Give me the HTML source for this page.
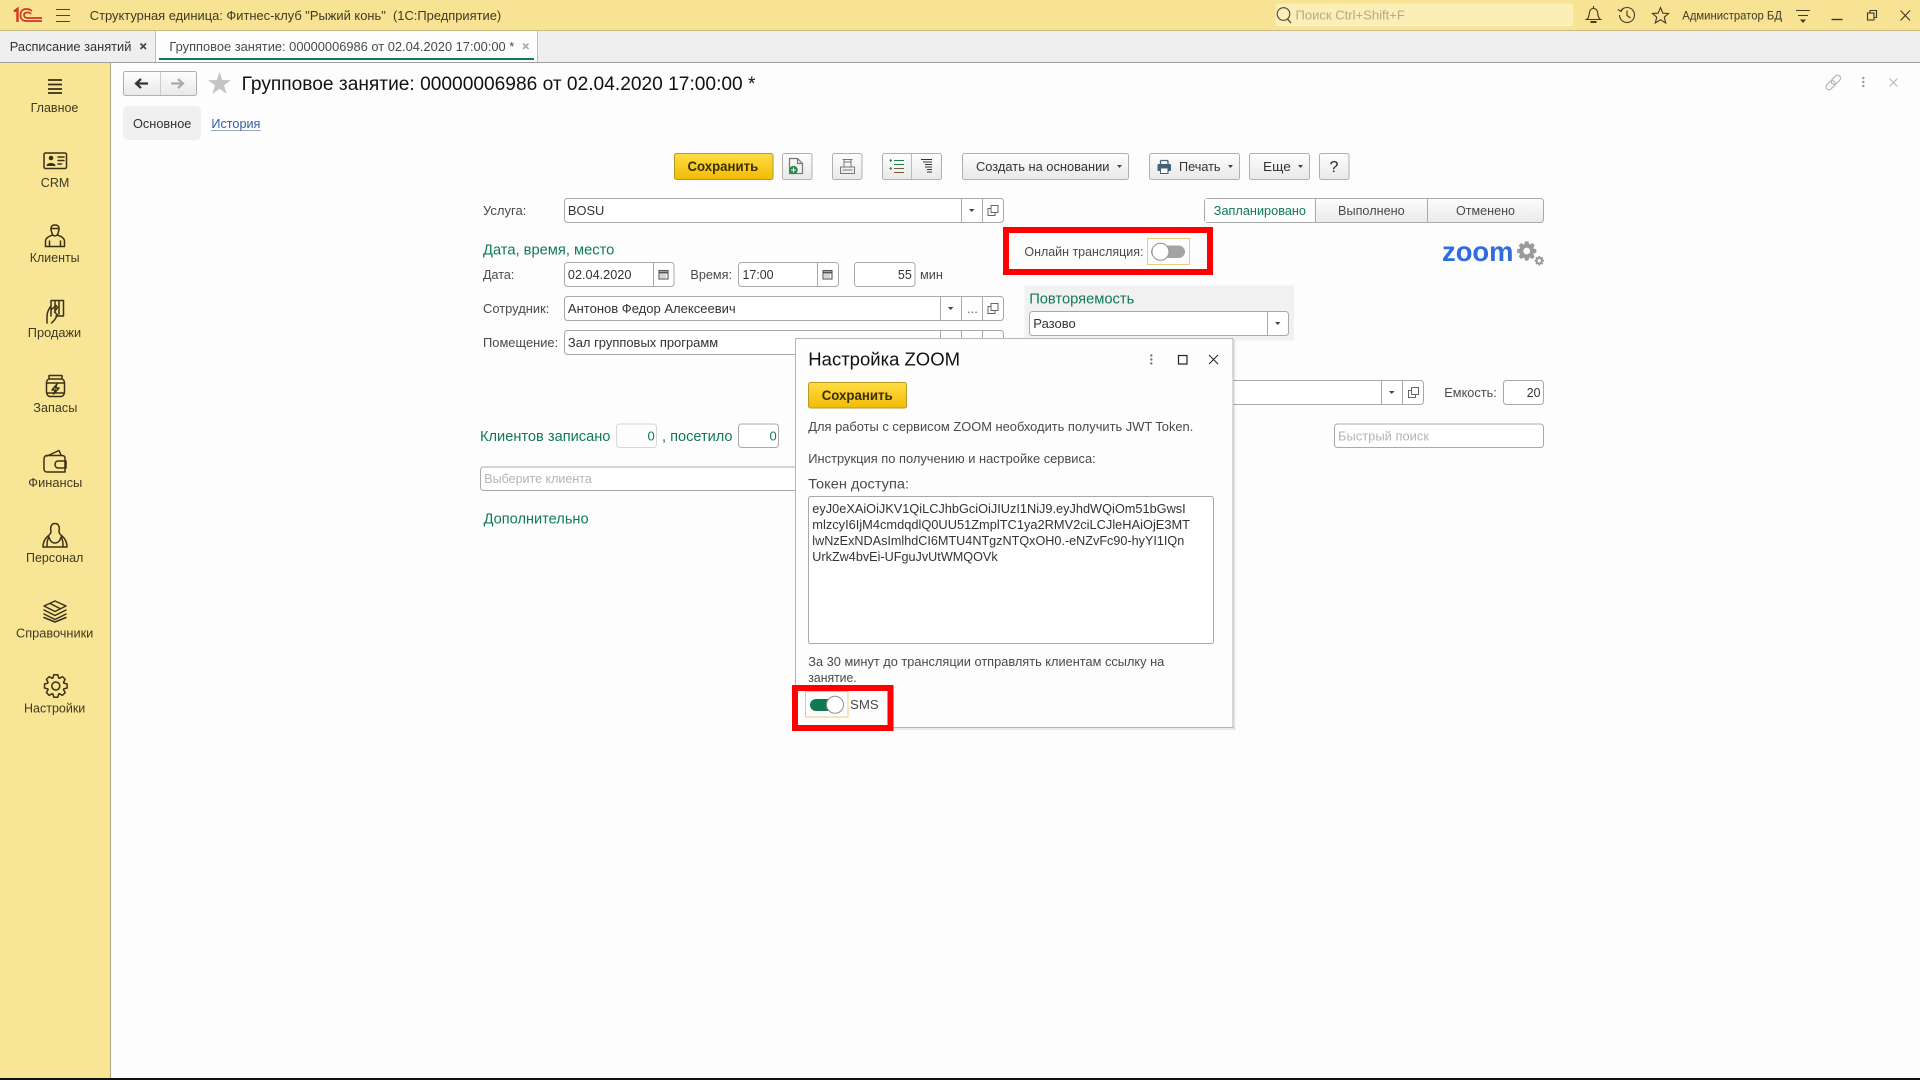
<!DOCTYPE html>
<html lang="ru"><head><meta charset="utf-8"><title>Групповое занятие</title>
<style>
html,body{margin:0;padding:0;background:#fff;width:1920px;height:1080px;overflow:hidden}
svg{display:block}
text{font-family:"Liberation Sans","Noto Sans CJK SC",sans-serif;font-size:13px;fill:#4a4a4a}
.g{fill:#0f7a55;font-size:15px}
.v{fill:#333}
.s{fill:#3f3a22;font-size:13px}
.ph{fill:#b4b4b4}
.b{font-weight:700;fill:#3a2f00;font-size:14px}
.i{fill:none;stroke:#3a3015;stroke-width:1.5;stroke-linejoin:round;stroke-linecap:round}
.f{fill:#fff;stroke:#a9a9a9;stroke-width:1}
.d{stroke:#a9a9a9;stroke-width:1}
.bt{fill:url(#btn);stroke:#b0b0b0;stroke-width:1}
.y{fill:url(#yel);stroke:#b89a22;stroke-width:1}
.a{fill:#444}
.red{fill:none;stroke:#fe0000;stroke-width:6}
.ic{fill:none;stroke:#555;stroke-width:1.2}
</style></head><body>
<svg xmlns="http://www.w3.org/2000/svg" width="1920" height="1080" viewBox="0 0 1920 1080">
<defs>
<linearGradient id="btn" x1="0" y1="0" x2="0" y2="1"><stop offset="0" stop-color="#fdfdfd"/><stop offset="1" stop-color="#e9e9e9"/></linearGradient>
<linearGradient id="yel" x1="0" y1="0" x2="0" y2="1"><stop offset="0" stop-color="#ffdd45"/><stop offset="1" stop-color="#f2bb06"/></linearGradient>
<polygon id="gear" points="8,-2.9 11.3,-2 11.3,2 8,2.9 7.7,3.6 9.4,6.6 6.6,9.4 3.6,7.7 2.9,8 2,11.3 -2,11.3 -2.9,8 -3.6,7.7 -6.6,9.4 -9.4,6.6 -7.7,3.6 -8,2.9 -11.3,2 -11.3,-2 -8,-2.9 -7.7,-3.6 -9.4,-6.6 -6.6,-9.4 -3.6,-7.7 -2.9,-8 -2,-11.3 2,-11.3 2.9,-8 3.6,-7.7 6.6,-9.4 9.4,-6.6 7.7,-3.6"/>
<g id="copy"><rect x="-2" y="-5" width="7" height="7" fill="none" stroke="#666" stroke-width="1"/><path d="M-2,-2H-5V5H2V2" fill="none" stroke="#666" stroke-width="1"/></g>
<g id="cal"><rect x="-4.5" y="-4" width="9" height="8.5" fill="none" stroke="#555" stroke-width="1.1"/><path d="M-4.5,-2H4.5" stroke="#555" stroke-width="2"/><path d="M-3,0.5H3M-3,2.5H3" stroke="#555" stroke-dasharray="1 1"/></g>
</defs>

<rect width="1920" height="1080" fill="#fdfdfd"/>
<rect y="1078" width="1920" height="2" fill="#111"/>

<!-- header -->
<rect width="1920" height="30" fill="#f8e294"/>
<rect y="30" width="1920" height="1" fill="#c9bb85"/>
<g fill="none" stroke="#d2361c" stroke-width="2.2">
<path d="M14,11.500L17.500,9V22" stroke-width="2.400"/>
<path d="M32,11C30,9.300 28,9 26,9C22.500,9 20.500,11.500 20.500,15C20.500,18.500 22.500,21 26,21H42" stroke-width="1.700"/>
<path d="M31,14C30,12.800 28.500,12.300 27,12.500C25,12.800 24,13.800 24,15C24,16.800 25.500,18 27.500,18H42" stroke-width="1.700"/>
</g>
<path d="M56,9.500H70M56,15.500H70M56,21.500H70" stroke="#4a4630" stroke-width="1.100"/>
<text x="89.800" y="20" class="s" textLength="411.400" lengthAdjust="spacingAndGlyphs" xml:space="preserve">Структурная единица: Фитнес-клуб "Рыжий конь"  (1С:Предприятие)</text>

<rect x="1275.500" y="3.500" width="297.500" height="23" rx="2" fill="#fbeeb6"/>
<circle cx="1283.500" cy="14" r="6.300" fill="none" stroke="#4a4630" stroke-width="1.100"/>
<path d="M1287.500,19L1291,23" stroke="#4a4630" stroke-width="1.300"/>
<text x="1295.500" y="19.500" style="fill:#b3ab84" textLength="109.300" lengthAdjust="spacingAndGlyphs">Поиск Ctrl+Shift+F</text>

<g fill="none" stroke="#3f3a22" stroke-width="1.100">
<path d="M1586.500,19.500C1589,18 1589,15 1589.500,12C1590,9.500 1591.500,8.500 1593.500,8.500C1595.500,8.500 1597,9.500 1597.500,12C1598,15 1598,18 1600.500,19.500Z"/>
<path d="M1593.500,6V8.500"/><path d="M1590.500,22H1596.500" stroke-width="2"/>
<path d="M1621,10.500A7.500,7.500 0 1 1 1619.500,15"/><path d="M1618,9.500L1621,11.500L1623,8.500"/><path d="M1627,10.500V15.500L1630.500,18"/>
<polygon points="1660.500,7.500 1662.900,13.200 1668.500,13.500 1664.300,17.200 1665.700,23 1660.500,19.800 1655.300,23 1656.700,17.200 1652.500,13.500 1658.100,13.200"/>
<path d="M1796,10.500H1810M1798,15.500H1808"/>
<path d="M1831.500,19.500H1842.500" stroke-width="1.400"/>
<rect x="1867.500" y="13" width="6.500" height="7"/><path d="M1870,13V10.500H1876.500V17.500H1874"/>
<path d="M1900.500,10.500L1910,20.500M1910,10.500L1900.500,20.500"/>
</g>
<polygon points="1800,19.500 1806,19.500 1803,23" fill="#3f3a22"/>
<text x="1682.300" y="19.500" class="s" style="font-size:12px" textLength="99.700" lengthAdjust="spacingAndGlyphs">Администратор БД</text>

<!-- tabs row -->
<rect y="31" width="1920" height="31" fill="#efefef"/>
<rect y="62" width="1920" height="1" fill="#9f9f9f"/>
<rect x="156" y="31" width="382" height="31" fill="#fdfdfd"/>
<path d="M155.500,31V62M537.500,31V62" stroke="#bdbdbd"/>
<rect x="159" y="58" width="375" height="2" fill="#0f7a55"/>
<text x="9.800" y="51" class="v" textLength="121.600" lengthAdjust="spacingAndGlyphs">Расписание занятий</text>
<path d="M140.500,43.500L146,49M146,43.500L140.500,49" stroke="#444" stroke-width="1.600"/>
<text x="169.400" y="51" textLength="344.900" lengthAdjust="spacingAndGlyphs">Групповое занятие: 00000006986 от 02.04.2020 17:00:00 *</text>
<path d="M523,43.500L528.500,49M528.500,43.500L523,49" stroke="#aaa" stroke-width="1.600"/>

<!-- sidebar -->
<rect y="63" width="110" height="1015" fill="#f8e596"/>
<rect x="110" y="63" width="1" height="1015" fill="#aea780"/>

<path d="M48,80H62M48,84.500H62M48,89H62M48,93H62" stroke="#3a3015" stroke-width="1.800"/>
<text x="30.600" y="112" class="s" textLength="47.800" lengthAdjust="spacingAndGlyphs">Главное</text>

<rect x="44" y="153" width="22.500" height="15.500" rx="1.500" class="i"/>
<circle cx="51" cy="158" r="2.300" fill="#3a3015"/><path d="M46.500,166C46.500,162 55.500,162 55.500,166Z" fill="#3a3015"/><path d="M58,157H64M58,160.500H64M58,164H61.500" class="i"/>
<text x="40.800" y="187" class="s" textLength="28.600" lengthAdjust="spacingAndGlyphs">CRM</text>

<path class="i" d="M51.500,231.500C50.500,228.500 50.500,225 55,225C59.500,225 59.500,228.500 58.500,231.500C58,234 57,236 55,236C53,236 52,234 51.500,231.500ZM51,228.500H59M52.500,235C49,236.500 46,237.500 45.500,241V246.500H64.500V241C64,237.500 61,236.500 57.500,235M49.500,246.500V241M60.500,246.500V241"/>
<text x="29.800" y="262" class="s" textLength="49.800" lengthAdjust="spacingAndGlyphs">Клиенты</text>

<path class="i" d="M51,316V300.500H63.500V316H56M55,300.500V312M59,300.500V314M51,306C48.500,309 47,313 47,317V323M51,310L56,305.500L57.500,307.500L54.500,312L57.500,315L54.500,320L51.500,323"/>
<text x="27.800" y="337" class="s" textLength="53.400" lengthAdjust="spacingAndGlyphs">Продажи</text>

<path class="i" d="M49,375.500H62V379H49ZM48,379.500C46.500,380.500 46.500,381.500 46.500,383V392C46.500,395 48.500,396.500 50,396.500H61C62.500,396.500 64.500,395 64.500,392V383C64.500,381.500 64.500,380.500 63,379.500M46.500,393H64.500M46.500,383H64.500M57,384L52,390H55.500L53.500,394L59,388H55.500Z"/>
<text x="33.300" y="412" class="s" textLength="44" lengthAdjust="spacingAndGlyphs">Запасы</text>

<path class="i" d="M47,456L59,450.500L61,455M44,459C44,456.500 45.500,455.500 47,455.500H62C64,455.500 65,456.500 65,458V472H47C45.500,472 44,471 44,469ZM66,461H58C56,461 55,463 55,464.500C55,466 56,468 58,468H66Z"/>
<text x="28.300" y="487" class="s" textLength="54" lengthAdjust="spacingAndGlyphs">Финансы</text>

<path class="i" d="M51,531C50,527 51.500,523.500 55,523.500C58.500,523.500 60,527 59,531C58.800,533 60,534.500 62,536C65,538.500 67,542 67,547H43C43,542 45,538.500 48,536C50,534.500 51.200,533 51,531ZM47,547C47,543 47,540 49,537C50,541 52,543 55,543C58,543 60,541 61,537C63,540 63,543 63,547"/>
<text x="26" y="562" class="s" textLength="57.300" lengthAdjust="spacingAndGlyphs">Персонал</text>

<path class="i" d="M55,601L66,606L55,611.500L44,606ZM44,610L55,615.500L66,610M44,614L55,619.500L66,614M44,617.500L55,622L66,617.500M50,603.500L60,608.500"/>
<text x="16" y="637.500" class="s" textLength="77.300" lengthAdjust="spacingAndGlyphs">Справочники</text>

<g transform="translate(55.800,686)"><use href="#gear" fill="none" stroke="#3a3015" stroke-width="1.500" stroke-linejoin="round"/><circle r="4" fill="none" stroke="#3a3015" stroke-width="1.500"/></g>
<text x="24" y="712.500" class="s" textLength="61.300" lengthAdjust="spacingAndGlyphs">Настройки</text>

<!-- form header -->
<rect x="123.500" y="71.500" width="73" height="24" rx="2" class="bt"/>
<path d="M160.500,72V95" stroke="#ccc"/>
<path d="M148,83.500H136M141,79L136,83.500L141,88" fill="none" stroke="#333" stroke-width="2.200"/>
<path d="M171,83.500H183M178,79L183,83.500L178,88" fill="none" stroke="#aaa" stroke-width="2.200"/>
<polygon points="219.500,72 222.300,80 231,80.200 224,85.300 226.600,94 219.500,88.800 212.400,94 215,85.300 208,80.200 216.700,80" fill="#c4c4c4"/>
<text x="241.600" y="90" style="font-size:19px;fill:#111" textLength="513.900" lengthAdjust="spacingAndGlyphs">Групповое занятие: 00000006986 от 02.04.2020 17:00:00 *</text>

<g fill="none" stroke="#b5b5b5" stroke-width="1.200" transform="rotate(-45 1833.300 82.500)">
<rect x="1824.300" y="79.500" width="10.500" height="6" rx="3"/><rect x="1831.800" y="79.500" width="10.500" height="6" rx="3"/>
</g>
<circle cx="1863.300" cy="78" r="1.200" fill="#999"/><circle cx="1863.300" cy="82" r="1.200" fill="#999"/><circle cx="1863.300" cy="86" r="1.200" fill="#999"/>
<path d="M1889.500,78.500L1897.500,86.500M1897.500,78.500L1889.500,86.500" stroke="#b5b5b5" stroke-width="1.100"/>

<rect x="123" y="106" width="78" height="34" rx="5" fill="#f0f0f0"/>
<text x="133" y="128" class="v" textLength="58.400" lengthAdjust="spacingAndGlyphs">Основное</text>
<text x="211.400" y="128" style="fill:#2f5ea8" textLength="49" lengthAdjust="spacingAndGlyphs">История</text>
<path d="M211.400,130.500H260.400" stroke="#2f5ea8" stroke-dasharray="1 1"/>

<!-- toolbar -->
<rect x="674.500" y="153.500" width="98.500" height="26" rx="2" class="y"/>
<text x="687.500" y="171" class="b" textLength="70.700" lengthAdjust="spacingAndGlyphs">Сохранить</text>

<rect x="782.500" y="153.500" width="29.500" height="26" rx="2" class="bt"/>
<path d="M789.500,158.500H797.500L802.500,163.500V173.500H789.500ZM797.500,158.500V163.500H802.500" fill="#f4f4f4" stroke="#777" stroke-width="1.200"/>
<circle cx="793.500" cy="170" r="4.300" fill="#2a8748"/><path d="M791,170H796M793.500,167.500V172.500" stroke="#fff"/>

<rect x="832.500" y="153.500" width="29.500" height="26" rx="2" class="bt"/>
<path d="M842.500,159.500H852.500M843.500,162H851.500M844,159.500V166.500M851,159.500V166.500M840.500,167H854.500V173.500H840.500ZM842.500,170H852.500" fill="none" stroke="#777" stroke-width="1"/>

<rect x="882.500" y="153.500" width="59" height="26" rx="2" class="bt"/>
<path d="M911.500,154V179" stroke="#bbb"/>
<path d="M894,160.500H904M894,164.500H904" stroke="#1f7a4f"/>
<path d="M894,168.500H904M894,172.500H904" stroke="#7a5a3a"/>
<path d="M889.500,160.500H892M890.700,159V162M889.500,168.500H892M890.700,167V170" stroke="#1f8a4c"/>
<path d="M921,159.500H932M923,162H932M925,164.500H932M925,167H932M927,169.500H932M927,172H932" stroke="#333" stroke-width="1"/>

<rect x="962.500" y="153.500" width="166" height="26" rx="2" class="bt"/>
<text x="976" y="171" class="v" textLength="133.500" lengthAdjust="spacingAndGlyphs">Создать на основании</text>
<polygon points="1117,165 1122,165 1119.500,168" class="a"/>

<rect x="1149.500" y="153.500" width="90" height="26" rx="2" class="bt"/>
<path d="M1160.500,160.500V164M1168,160.500V164M1160.500,160.500H1168" fill="none" stroke="#41607a" stroke-width="1.300"/>
<rect x="1157.500" y="164" width="13.500" height="7" rx="1" fill="#41607a"/><rect x="1160.500" y="168" width="7.500" height="5.500" fill="#fff" stroke="#41607a"/>
<text x="1179" y="171" class="v" textLength="41.500" lengthAdjust="spacingAndGlyphs">Печать</text>
<polygon points="1228,165 1233,165 1230.500,168" class="a"/>

<rect x="1249.500" y="153.500" width="60" height="26" rx="2" class="bt"/>
<text x="1263" y="171" class="v" textLength="27.800" lengthAdjust="spacingAndGlyphs">Еще</text>
<polygon points="1298,165 1303,165 1300.500,168" class="a"/>

<rect x="1319.500" y="153.500" width="29.500" height="26" rx="2" class="bt"/>
<text x="1329.500" y="172" style="font-size:16px;fill:#222">?</text>

<!-- row Услуга -->
<text x="483" y="215" textLength="43.400" lengthAdjust="spacingAndGlyphs">Услуга:</text>
<rect x="564.500" y="198.500" width="439" height="24" rx="3" class="f"/>
<path d="M961.500,199V222M982.500,199V222" class="d"/>
<text x="567.900" y="215" class="v" textLength="36.400" lengthAdjust="spacingAndGlyphs">BOSU</text>
<polygon points="969,209 974.500,209 971.700,212" class="a"/>
<use href="#copy" x="993" y="210.500"/>

<rect x="1204.500" y="198.500" width="339" height="24" rx="3" fill="url(#btn)" stroke="#a9a9a9"/>
<path d="M1205,199H1315.500V222H1205Z" fill="#fdfdfd"/>
<path d="M1315.500,199V222M1427.500,199V222" class="d"/>
<text x="1213.800" y="215" style="fill:#0f7a55" textLength="92.200" lengthAdjust="spacingAndGlyphs">Запланировано</text>
<text x="1338" y="215" textLength="66.700" lengthAdjust="spacingAndGlyphs">Выполнено</text>
<text x="1456" y="215" textLength="59" lengthAdjust="spacingAndGlyphs">Отменено</text>

<text x="483" y="254.500" class="g" textLength="131.300" lengthAdjust="spacingAndGlyphs">Дата, время, место</text>

<!-- date row -->
<text x="483" y="279" textLength="31.300" lengthAdjust="spacingAndGlyphs">Дата:</text>
<rect x="564.500" y="262.500" width="109.500" height="24" rx="3" class="f"/><path d="M653.500,263V286" class="d"/>
<text x="567.900" y="279" class="v" textLength="63.500" lengthAdjust="spacingAndGlyphs">02.04.2020</text>
<use href="#cal" x="663.500" y="274.500"/>
<text x="690.400" y="279" textLength="41.600" lengthAdjust="spacingAndGlyphs">Время:</text>
<rect x="738.500" y="262.500" width="100" height="24" rx="3" class="f"/><path d="M817.500,263V286" class="d"/>
<text x="742.500" y="279" class="v" textLength="31.100" lengthAdjust="spacingAndGlyphs">17:00</text>
<use href="#cal" x="827.500" y="274.500"/>
<rect x="854.500" y="262.500" width="60.500" height="24" rx="3" class="f"/>
<text x="897.900" y="279" class="v" textLength="13.900" lengthAdjust="spacingAndGlyphs">55</text>
<text x="920" y="279" textLength="22.900" lengthAdjust="spacingAndGlyphs">мин</text>

<!-- employee -->
<text x="483" y="313" textLength="66.300" lengthAdjust="spacingAndGlyphs">Сотрудник:</text>
<rect x="564.500" y="296.500" width="439" height="24" rx="3" class="f"/><path d="M940.500,297V320M961.500,297V320M982.500,297V320" class="d"/>
<text x="567.900" y="313" class="v" textLength="167.800" lengthAdjust="spacingAndGlyphs">Антонов Федор Алексеевич</text>
<polygon points="948,307 953.500,307 950.700,310" class="a"/>
<text x="967" y="313" style="fill:#666">...</text>
<use href="#copy" x="993" y="308.500"/>

<text x="483" y="347" textLength="75.200" lengthAdjust="spacingAndGlyphs">Помещение:</text>
<rect x="564.500" y="330.500" width="439" height="24" rx="3" class="f"/><path d="M940.500,331V354M961.500,331V354M982.500,331V354" class="d"/>
<text x="567.900" y="347" class="v" textLength="150.300" lengthAdjust="spacingAndGlyphs">Зал групповых программ</text>

<!-- red online -->
<rect x="1006" y="230" width="204" height="42" class="red"/>
<text x="1024.400" y="256" textLength="119.100" lengthAdjust="spacingAndGlyphs">Онлайн трансляция:</text>
<rect x="1147.500" y="238.500" width="42" height="26" fill="#fdfdfd" stroke="#e6cf7c"/>
<rect x="1151" y="245.500" width="34" height="12.500" rx="6.250" fill="#a3a3a3"/>
<circle cx="1160.500" cy="251.700" r="8.500" fill="#fff" stroke="#8f8f8f"/>

<!-- zoom logo -->
<text x="1442" y="261" style="font-size:28px;font-weight:700;fill:#2d6dde" textLength="71.500" lengthAdjust="spacingAndGlyphs">zoom</text>
<g transform="translate(1526.700,251) scale(0.85)"><use href="#gear" fill="#9a9a9a"/><circle r="4" fill="#fdfdfd"/></g>
<g transform="translate(1539.300,260.700) scale(0.42)"><use href="#gear" fill="#9a9a9a"/><circle r="4" fill="#fdfdfd"/></g>

<!-- repeat -->
<rect x="1024.500" y="285.500" width="269.500" height="55" fill="#f1f1f1"/>
<text x="1029.200" y="303.500" class="g" textLength="105.100" lengthAdjust="spacingAndGlyphs">Повторяемость</text>
<rect x="1029.500" y="311.500" width="259" height="24" rx="3" class="f"/><path d="M1267.500,312V335" class="d"/>
<text x="1033.300" y="328" class="v" textLength="42.500" lengthAdjust="spacingAndGlyphs">Разово</text>
<polygon points="1275,322 1280.500,322 1277.700,325" class="a"/>

<!-- capacity row -->
<rect x="1100.500" y="380.500" width="323" height="24" rx="3" class="f"/><path d="M1381.500,381V404M1402.500,381V404" class="d"/>
<polygon points="1389,391 1394.500,391 1391.700,394" class="a"/>
<use href="#copy" x="1413.500" y="392.500"/>
<text x="1444.300" y="397" textLength="52.500" lengthAdjust="spacingAndGlyphs">Емкость:</text>
<rect x="1503.500" y="380.500" width="40" height="24" rx="3" class="f"/>
<text x="1526.800" y="397" class="v" textLength="13.700" lengthAdjust="spacingAndGlyphs">20</text>

<!-- clients -->
<text x="480" y="441" class="g" textLength="130.400" lengthAdjust="spacingAndGlyphs">Клиентов записано</text>
<rect x="616.500" y="424" width="40" height="23.500" rx="3" fill="#fdfdfd" stroke="#d8d8d8"/>
<text x="647.500" y="440.500" style="fill:#0f7a55">0</text>
<text x="662" y="441" class="g" textLength="70.500" lengthAdjust="spacingAndGlyphs">, посетило</text>
<rect x="738.500" y="424" width="40" height="23.500" rx="3" class="f"/>
<text x="769.500" y="440.500" style="fill:#0f7a55">0</text>
<rect x="1334.500" y="424" width="209" height="23.500" rx="3" class="f"/>
<text x="1338" y="440.500" class="ph" textLength="91" lengthAdjust="spacingAndGlyphs">Быстрый поиск</text>

<rect x="480.500" y="467" width="400" height="23.500" rx="3" class="f"/>
<text x="484.300" y="483" class="ph" textLength="107.500" lengthAdjust="spacingAndGlyphs">Выберите клиента</text>
<text x="483.600" y="523.500" class="g" textLength="105" lengthAdjust="spacingAndGlyphs">Дополнительно</text>

<!-- dialog -->
<rect x="795.500" y="338.500" width="437.500" height="389" fill="#fdfdfd" stroke="#b5b5b5"/>
<rect x="1233.500" y="340" width="2" height="389" fill="#000" opacity=".08"/>
<rect x="797" y="728" width="438" height="2" fill="#000" opacity=".08"/>
<text x="808.300" y="365.500" style="font-size:18px;fill:#111" textLength="151.700" lengthAdjust="spacingAndGlyphs">Настройка ZOOM</text>
<circle cx="1151.300" cy="355.500" r="1.200" fill="#777"/><circle cx="1151.300" cy="359.500" r="1.200" fill="#777"/><circle cx="1151.300" cy="363.500" r="1.200" fill="#777"/>
<rect x="1178.500" y="355.500" width="8.500" height="8.500" fill="none" stroke="#222" stroke-width="1.200"/>
<path d="M1209,355L1218,364M1218,355L1209,364" stroke="#222" stroke-width="1"/>
<rect x="808.500" y="382.500" width="98" height="25.500" rx="2" class="y"/>
<text x="821.700" y="400" class="b" textLength="71" lengthAdjust="spacingAndGlyphs">Сохранить</text>
<text x="808.300" y="431" textLength="385" lengthAdjust="spacingAndGlyphs">Для работы с сервисом ZOOM необходить получить JWT Token.</text>
<text x="808.300" y="463" textLength="287.400" lengthAdjust="spacingAndGlyphs">Инструкция по получению и настройке сервиса:</text>
<text x="808.300" y="488.500" style="font-size:14px" textLength="100.700" lengthAdjust="spacingAndGlyphs">Токен доступа:</text>
<rect x="808.500" y="496.500" width="405" height="147" rx="2" class="f"/>
<text x="812.300" y="513" class="v" textLength="373.400" lengthAdjust="spacingAndGlyphs">eyJ0eXAiOiJKV1QiLCJhbGciOiJIUzI1NiJ9.eyJhdWQiOm51bGwsI</text>
<text x="812.300" y="529" class="v" textLength="377.700" lengthAdjust="spacingAndGlyphs">mlzcyI6IjM4cmdqdlQ0UU51ZmplTC1ya2RMV2ciLCJleHAiOjE3MT</text>
<text x="812.300" y="545" class="v" textLength="372" lengthAdjust="spacingAndGlyphs">lwNzExNDAsImlhdCI6MTU4NTgzNTQxOH0.-eNZvFc90-hyYI1IQn</text>
<text x="812.300" y="561" class="v" textLength="185.400" lengthAdjust="spacingAndGlyphs">UrkZw4bvEi-UFguJvUtWMQOVk</text>
<text x="808.300" y="666" textLength="356" lengthAdjust="spacingAndGlyphs">За 30 минут до трансляции отправлять клиентам ссылку на</text>
<text x="808.300" y="682" textLength="48.400" lengthAdjust="spacingAndGlyphs">занятие.</text>
<rect x="795" y="688" width="95.500" height="40" class="red"/>
<rect x="805.500" y="691.500" width="42.500" height="25.500" fill="#fdfdfd" stroke="#e6cf7c"/>
<rect x="810" y="699" width="33.500" height="12" rx="6" fill="#0f7a4f"/>
<circle cx="835" cy="704.700" r="8.500" fill="#fff" stroke="#8f8f8f"/>
<text x="850" y="709" textLength="28.700" lengthAdjust="spacingAndGlyphs">SMS</text>
</svg>
</body></html>
